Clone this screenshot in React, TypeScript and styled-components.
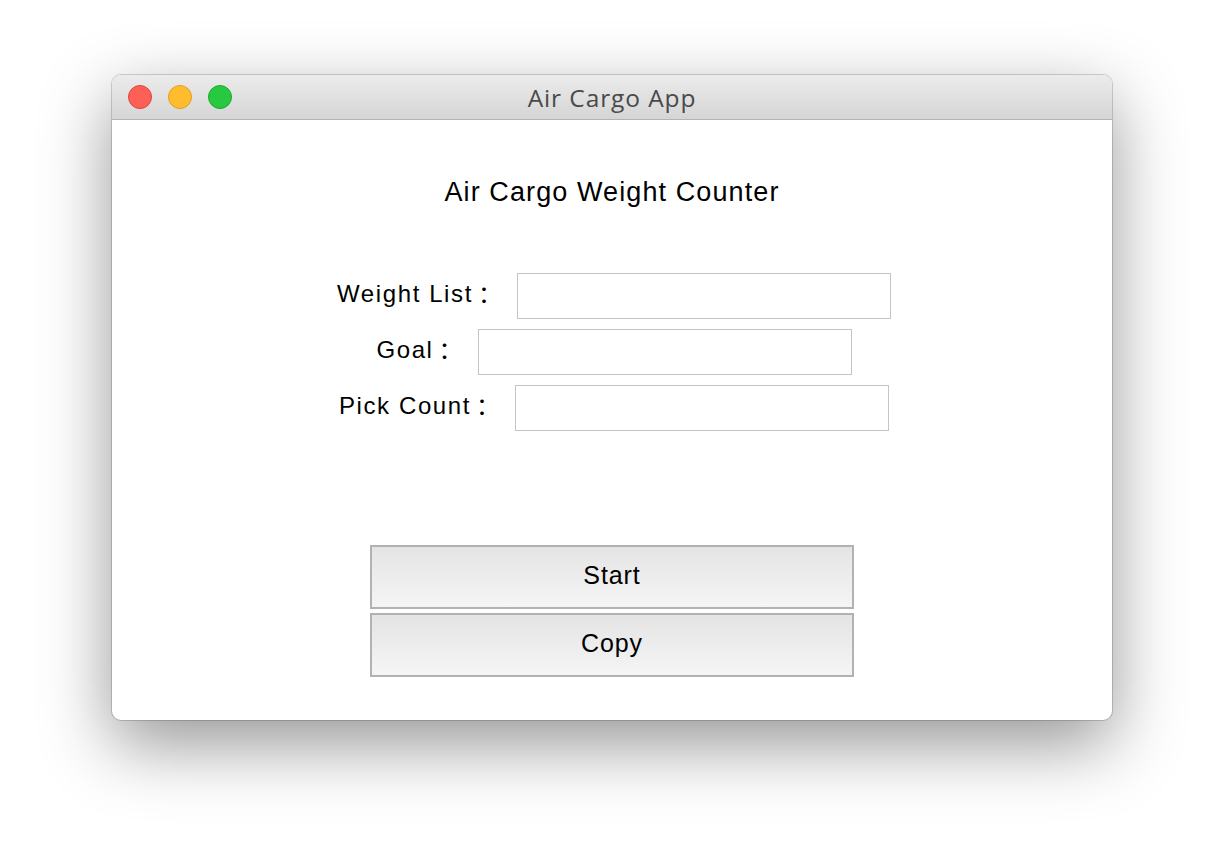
import { FC } from 'react'
import styled, { createGlobalStyle } from 'styled-components'

const GlobalStyle = createGlobalStyle`
  html, body {
    margin: 0;
    padding: 0;
    background: #ffffff;
  }
  body {
    font-family: 'Liberation Sans', 'Noto Sans CJK KR', Arial, sans-serif;
  }
`

const Desktop = styled.div`
  width: 1224px;
  height: 868px;
  box-sizing: border-box;
  padding-top: 75px;
  display: flex;
  justify-content: center;
  align-items: flex-start;
  background: #ffffff;
`

const Window = styled.div`
  width: 1000px;
  height: 645px;
  display: flex;
  flex-direction: column;
  border-radius: 9px;
  overflow: hidden;
  background: #ffffff;
  box-shadow: 0 0 0 1px rgba(0, 0, 0, 0.16), 0 24px 70px rgba(0, 0, 0, 0.42);
`

const TitleBar = styled.div`
  flex: none;
  height: 45px;
  box-sizing: border-box;
  display: grid;
  grid-template-columns: 1fr auto 1fr;
  align-items: center;
  padding: 0 16px;
  background: linear-gradient(#ebebeb, #d5d5d5);
  border-bottom: 1px solid #b3b3b3;
`

const Lights = styled.div`
  display: flex;
  gap: 16px;
`

const Light = styled.span<{ $fill: string; $edge: string }>`
  width: 24px;
  height: 24px;
  border-radius: 50%;
  box-sizing: border-box;
  background: ${({ $fill }) => $fill};
  border: 1px solid ${({ $edge }) => $edge};
`

const WindowTitle = styled.div`
  font-family: 'Open Sans', 'Liberation Sans', sans-serif;
  font-size: 24.5px;
  line-height: 30px;
  color: #4a4a4a;
  letter-spacing: 0.9px;
  padding-top: 2px;
`

const Content = styled.div`
  flex: auto;
  display: flex;
  flex-direction: column;
  align-items: center;
  padding-top: 56px;
`

const Heading = styled.h1`
  margin: 0;
  font-size: 27px;
  line-height: 32px;
  font-weight: normal;
  color: #000;
  letter-spacing: 1.1px;
`

const Form = styled.div`
  display: flex;
  flex-direction: column;
  align-items: center;
  gap: 10px;
  margin-top: 65px;
  padding-left: 4px;
`

const Row = styled.div`
  display: flex;
  align-items: center;
`

const Label = styled.label`
  display: flex;
  align-items: center;
  font-size: 24px;
  line-height: 28px;
  letter-spacing: 1.6px;
  color: #000;
  margin-right: 25px;
  padding-bottom: 4px;
  white-space: nowrap;
`

const Colon = styled.span`
  width: 20px;
  margin-left: -1px;
  text-align: center;
  letter-spacing: 0;
  font-family: 'Noto Sans CJK KR', sans-serif;
  line-height: 28px;
`

const Field = styled.input`
  width: 374px;
  height: 46px;
  box-sizing: border-box;
  border: 1px solid #c4c4c4;
  border-radius: 0;
  background: #fff;
  outline: none;
  font-size: 20px;
`

const Buttons = styled.div`
  display: flex;
  flex-direction: column;
  gap: 4px;
  margin-top: 114px;
`

const Button = styled.button`
  width: 484px;
  height: 64px;
  box-sizing: border-box;
  border: 2px solid #b2b2b2;
  padding: 0 0 4px;
  background: linear-gradient(#e4e4e4, #f5f5f5);
  font-family: 'Liberation Sans', sans-serif;
  font-size: 25px;
  letter-spacing: 0.9px;
  color: #000;
  cursor: pointer;
`

const fields = ['Weight List', 'Goal', 'Pick Count']

const App: FC = () => (
  <>
    <GlobalStyle />
    <Desktop>
      <Window>
        <TitleBar>
          <Lights>
            <Light $fill="#fe5f57" $edge="#e0443e" />
            <Light $fill="#febc2e" $edge="#dea123" />
            <Light $fill="#28c840" $edge="#1aab29" />
          </Lights>
          <WindowTitle>Air Cargo App</WindowTitle>
          <div />
        </TitleBar>
        <Content>
          <Heading>Air Cargo Weight Counter</Heading>
          <Form>
            {fields.map((name) => (
              <Row key={name}>
                <Label>
                  {name}
                  <Colon>：</Colon>
                </Label>
                <Field type="text" />
              </Row>
            ))}
          </Form>
          <Buttons>
            <Button>Start</Button>
            <Button>Copy</Button>
          </Buttons>
        </Content>
      </Window>
    </Desktop>
  </>
)

export default App
